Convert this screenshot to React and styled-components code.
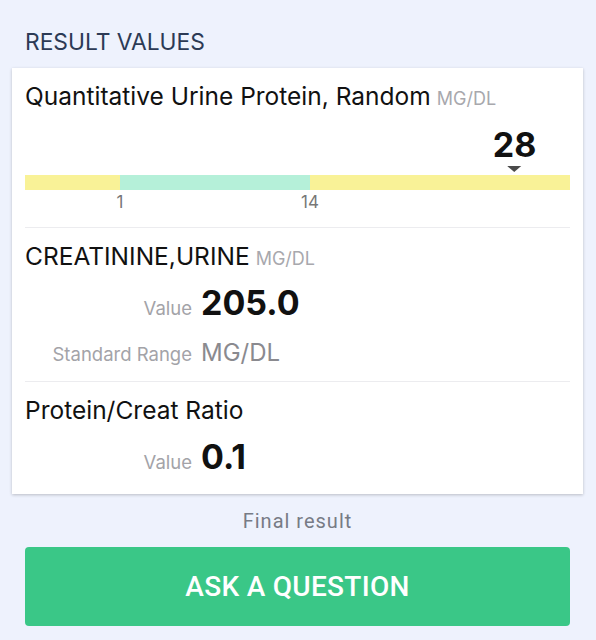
import React from "react";
import styled, { createGlobalStyle } from "styled-components";

const Global = createGlobalStyle`
  html, body { margin: 0; padding: 0; background: #eef2fd; }
  body { font-family: Inter, "Noto Sans", sans-serif; -webkit-font-smoothing: antialiased; }
`;

const Page = styled.div`
  width: 596px;
  box-sizing: border-box;
  padding: 30px 13px 14px 12px;
  display: flex;
  flex-direction: column;
`;

const Heading = styled.div`
  padding-left: 13px;
  font-size: 22.8px;
  line-height: 24px;
  color: #2c3a55;
`;

const Card = styled.div`
  margin-top: 14px;
  background: #fff;
  box-shadow: 0 1px 3px rgba(0, 0, 0, 0.22);
  padding: 0 13px;
`;

const Section = styled.div`
  padding: 13px 0 ${(p) => p.$pb || 4}px;
  border-bottom: 1px solid #ececef;
  &:last-child { border-bottom: none; padding-bottom: 11px; }
`;

const Title = styled.div`
  font-size: 24.5px;
  line-height: 30px;
  height: 30px;
  color: #111;
  white-space: nowrap;
`;

const Unit = styled.span`
  font-size: 18px;
  color: #a8a8ad;
  margin-left: 6px;
`;

const MarkerArea = styled.div`
  position: relative;
  height: 64px;
`;

const Marker = styled.div`
  position: absolute;
  bottom: 0;
  transform: translateX(-50%);
  display: flex;
  flex-direction: column;
  align-items: center;
`;

const BigValue = styled.div`
  font-size: 34px;
  font-weight: 700;
  line-height: 36px;
  color: #111;
`;

const Triangle = styled.div`
  width: 0;
  height: 0;
  margin: 3px 0 3px;
  border-left: 7px solid transparent;
  border-right: 7px solid transparent;
  border-top: 6px solid #4a4a4a;
`;

const Bar = styled.div`
  display: flex;
  height: 15px;
`;

const Segment = styled.div`
  background: ${(p) => (p.$ok ? "#b5f0d9" : "#f9f297")};
`;

const Ticks = styled.div`
  position: relative;
  height: 20px;
  margin-top: 2px;
`;

const Tick = styled.span`
  position: absolute;
  top: 0;
  transform: translateX(-50%);
  font-size: 17px;
  line-height: 20px;
  color: #777;
`;

const KVList = styled.div`
  margin-top: 10px;
  display: flex;
  flex-direction: column;
`;

const KVRow = styled.div`
  height: 48px;
  display: grid;
  grid-template-columns: 167px auto;
  column-gap: 9px;
  align-items: baseline;
  align-content: center;
`;

const KLabel = styled.span`
  text-align: right;
  font-size: 18.5px;
  line-height: 40px;
  color: #a3a3a8;
`;

const KValue = styled.span`
  font-size: ${(p) => (p.$muted ? "24px" : "34px")};
  font-weight: ${(p) => (p.$muted ? 400 : 700)};
  color: ${(p) => (p.$muted ? "#8a8a8f" : "#111")};
  line-height: 40px;
`;

const Footer = styled.div`
  margin-top: 15px;
  text-align: center;
  font-family: Roboto, "Noto Sans", sans-serif;
  font-size: 20px;
  letter-spacing: 1px;
  line-height: 24px;
  color: #777b85;
`;

const AskButton = styled.button`
  margin: 14px 13px 0 13px;
  height: 79px;
  border: none;
  border-radius: 4px;
  background: #3ac787;
  color: #fff;
  font-family: Roboto, "Noto Sans", sans-serif;
  font-size: 28px;
  font-weight: 500;
  letter-spacing: 0.3px;
  cursor: pointer;
`;

const MIN_PCT = 17.43;
const MAX_PCT = 52.29;
const toPct = (v) => MIN_PCT + ((v - 1) / 13) * (MAX_PCT - MIN_PCT);

export default function App() {
  const value = 28;
  const pos = toPct(value);
  return (
    <>
      <Global />
      <Page>
        <Heading>RESULT VALUES</Heading>
        <Card>
          <Section $pb={15}>
            <Title>
              Quantitative Urine Protein, Random<Unit>MG/DL</Unit>
            </Title>
            <MarkerArea>
              <Marker style={{ left: `${pos}%` }}>
                <BigValue>{value}</BigValue>
                <Triangle />
              </Marker>
            </MarkerArea>
            <Bar>
              <Segment style={{ width: `${MIN_PCT}%` }} />
              <Segment $ok style={{ width: `${MAX_PCT - MIN_PCT}%` }} />
              <Segment style={{ flex: 1 }} />
            </Bar>
            <Ticks>
              <Tick style={{ left: `${MIN_PCT}%` }}>1</Tick>
              <Tick style={{ left: `${MAX_PCT}%` }}>14</Tick>
            </Ticks>
          </Section>
          <Section>
            <Title>
              CREATININE,URINE<Unit>MG/DL</Unit>
            </Title>
            <KVList>
              <KVRow>
                <KLabel>Value</KLabel>
                <KValue>205.0</KValue>
              </KVRow>
              <KVRow>
                <KLabel>Standard Range</KLabel>
                <KValue $muted>MG/DL</KValue>
              </KVRow>
            </KVList>
          </Section>
          <Section>
            <Title>Protein/Creat Ratio</Title>
            <KVList>
              <KVRow>
                <KLabel>Value</KLabel>
                <KValue>0.1</KValue>
              </KVRow>
            </KVList>
          </Section>
        </Card>
        <Footer>Final result</Footer>
        <AskButton>ASK A QUESTION</AskButton>
      </Page>
    </>
  );
}
